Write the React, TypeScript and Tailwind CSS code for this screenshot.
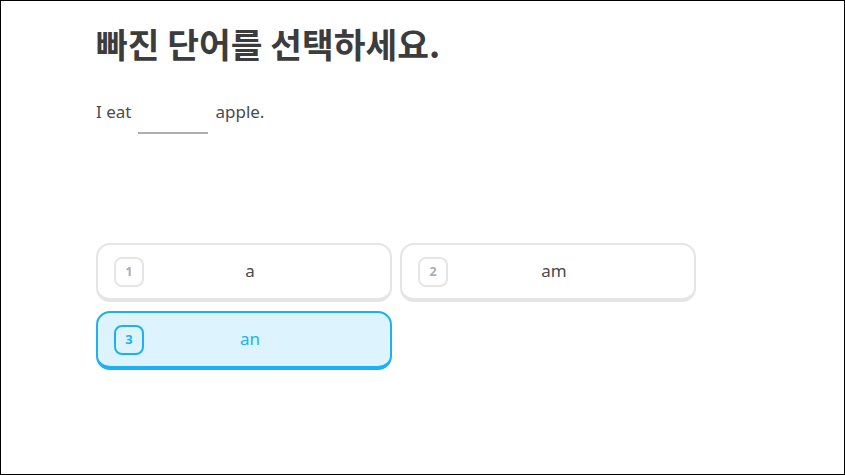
const options = [
  { n: 1, text: "a", selected: false },
  { n: 2, text: "am", selected: false },
  { n: 3, text: "an", selected: true },
];

const OptionButton = ({ n, text, selected }: { n: number; text: string; selected: boolean }) => (
  <button
    className={
      "flex h-[59px] w-[296px] items-center rounded-[14px] border-2 border-b-[4px] px-[16px] " +
      (selected ? "border-[#1cb0f6] bg-[#ddf4ff]" : "border-[#e5e5e5] bg-white")
    }
  >
    <span
      className={
        "flex h-[30px] w-[30px] items-center justify-center rounded-[8px] border-2 text-[13px] font-bold " +
        (selected ? "border-[#1cb0f6] text-[#1cb0f6]" : "border-[#e5e5e5] text-[#afafaf]")
      }
    >
      {n}
    </span>
    <span
      className={
        "mr-[18px] mb-[2px] flex-1 text-center text-[17px] " +
        (selected ? "text-[#1cb0f6]" : "text-[#4b4b4b]")
      }
    >
      {text}
    </span>
  </button>
);

export default function App() {
  return (
    <div
      className="h-[475px] w-[845px] border border-black bg-white"
      style={{ fontFamily: '"Noto Sans", "Noto Sans CJK KR", sans-serif' }}
    >
      <div className="pl-[95px] pt-[18px]">
        <h1
          className="text-[34.5px] font-bold leading-[48px] text-[#3c3c3c]"
          style={{ fontFamily: '"Noto Sans CJK KR", sans-serif' }}
        >
          빠진 단어를 선택하세요.
        </h1>
        <div className="mt-[33px] flex items-end text-[17px] leading-[24px] text-[#4b4b4b]">
          <span className="pb-[10px]">I eat</span>
          <span className="mx-[7px] h-[27px] w-[70px] border-b-2 border-[#afafaf]" />
          <span className="pb-[10px]">apple.</span>
        </div>
        <div className="mt-[109px] grid w-[600px] grid-cols-2 gap-x-[8px] gap-y-[9px]">
          {options.map((o) => (
            <OptionButton key={o.n} {...o} />
          ))}
        </div>
      </div>
    </div>
  );
}
